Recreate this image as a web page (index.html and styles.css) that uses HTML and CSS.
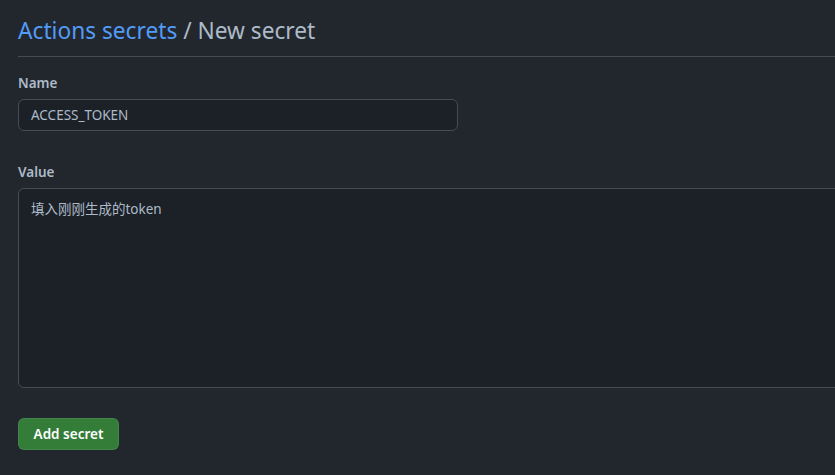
FILE: index.html
```html
<!DOCTYPE html>
<html lang="zh">
<head>
<meta charset="utf-8">
<link rel="stylesheet" href="styles.css">
</head>
<body>
<div class="page">
  <div class="header">
    <h2 class="title"><a class="crumb" href="#">Actions secrets</a> / New secret</h2>
  </div>
  <form class="form">
    <div class="group">
      <label class="label">Name</label>
      <div class="input">ACCESS_TOKEN</div>
    </div>
    <div class="group">
      <label class="label">Value</label>
      <div class="textarea">填入刚刚生成的token</div>
    </div>
    <div class="actions">
      <button type="button" class="btn">Add secret</button>
    </div>
  </form>
</div>
</body>
</html>
```

FILE: styles.css
```css
html, body {
  margin: 0;
  padding: 0;
  background: #22272e;
  overflow: hidden;
}
body {
  font-family: "Noto Sans", "Noto Sans CJK SC", sans-serif;
  color: #adbac7;
  font-size: 13.5px;
}
.page {
  width: 1100px;
  padding: 12px 0 0 18px;
}
.header {
  border-bottom: 1px solid #444c56;
  padding-bottom: 6px;
  margin-bottom: 16px;
}
.title {
  margin: 0;
  font-size: 22.7px;
  font-weight: 400;
  line-height: 38px;
  color: #adbac7;
}
.crumb {
  color: #539bf5;
  text-decoration: none;
}
.group {
  margin-bottom: 31px;
}
.group + .group {
  margin-bottom: 30px;
}
.label {
  display: block;
  font-weight: 600;
  font-size: 13.5px;
  line-height: 20px;
  margin-bottom: 6px;
  color: #adbac7;
}
.input {
  box-sizing: border-box;
  width: 440px;
  height: 32px;
  padding: 0 12px;
  line-height: 30px;
  background: #1c2128;
  border: 1px solid #444c56;
  border-radius: 6px;
}
.textarea {
  box-sizing: border-box;
  width: 1000px;
  height: 200px;
  padding: 10px 12px;
  line-height: 20px;
  background: #1c2128;
  border: 1px solid #444c56;
  border-radius: 6px;
}
.btn {
  font-family: inherit;
  font-size: 13.5px;
  font-weight: 600;
  color: #ffffff;
  background: #347d39;
  border: 1px solid rgba(205, 217, 229, 0.1);
  border-radius: 6px;
  height: 32px;
  width: 101px;
  padding: 0;
  line-height: 20px;
}
```
